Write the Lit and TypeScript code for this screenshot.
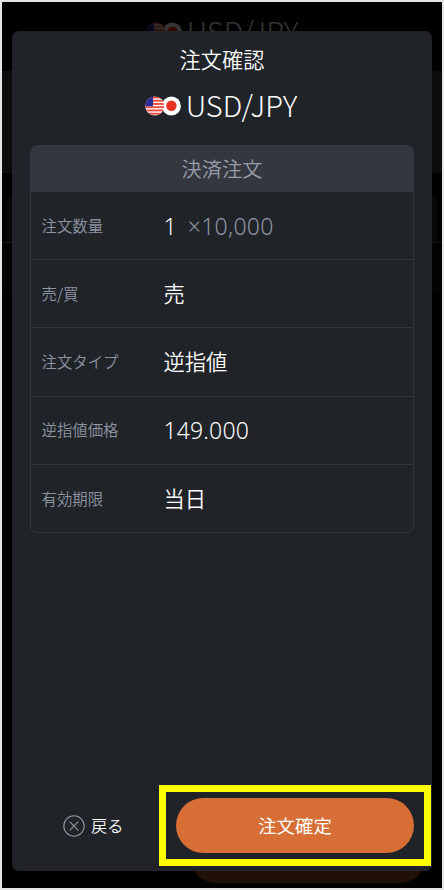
import { LitElement, html, svg, css } from "lit";
import { customElement } from "lit/decorators.js";

interface Row {
  label: string;
  value: string;
  unit?: string;
  latin?: boolean;
}

const ROWS: Row[] = [
  { label: "注文数量", value: "1", unit: "×10,000", latin: true },
  { label: "売/買", value: "売" },
  { label: "注文タイプ", value: "逆指値" },
  { label: "逆指値価格", value: "149.000", latin: true },
  { label: "有効期限", value: "当日" },
];

@customElement("currency-pair")
class CurrencyPair extends LitElement {
  static styles = css`
    :host {
      display: flex;
      justify-content: center;
      align-items: center;
      height: 40px;
      color: #fafafa;
    }
    .flags {
      width: 36px;
      height: 20px;
      margin-right: 5px;
      margin-top: 2px;
    }
    .name {
      padding-bottom: 2px;
      font: 300 29px/38px "Noto Sans CJK JP", sans-serif;
      white-space: nowrap;
    }
  `;
  render() {
    return html`
      <svg class="flags" viewBox="0 0 36 20">
        <defs><clipPath id="us"><circle cx="9.8" cy="10" r="9.5" /></clipPath></defs>
        <circle cx="26.4" cy="10" r="9.5" fill="#fff" />
        <circle cx="26.4" cy="9.8" r="5.2" fill="#ea3323" />
        <g clip-path="url(#us)">
          <rect width="20" height="20" fill="#fff" />
          ${[0, 1, 2, 3, 4, 5].map(
            (i) => svg`<rect y=${0.5 + i * 3.25} width="20" height="1.9" fill="#eb4a3d" />`
          )}
          <rect width="8" height="10.2" fill="#2a2c9c" />
        </g>
      </svg>
      <span class="name">USD/JPY</span>
    `;
  }
}

@customElement("order-table")
class OrderTable extends LitElement {
  static styles = css`
    :host {
      display: block;
      box-sizing: border-box;
      height: 388px;
      border: 1px solid #33363d;
      border-radius: 7px;
      overflow: hidden;
      font-family: "Noto Sans CJK JP", sans-serif;
      font-weight: 350;
    }
    .head {
      height: 46px;
      background: #353740;
      color: #989daa;
      font-size: 20.2px;
      line-height: 46px;
      text-align: center;
    }
    .row {
      box-sizing: border-box;
      display: flex;
      align-items: center;
      height: 68.2px;
      padding: 0 0 2px 10.5px;
      border-bottom: 1px solid #33363b;
    }
    .row:last-child {
      border-bottom: 0;
    }
    .label {
      width: 122px;
      color: #8f94a2;
      font-size: 15.4px;
      line-height: 24px;
    }
    .value {
      color: #fafafa;
      font-size: 21.3px;
      line-height: 32px;
    }
    .latin {
      padding-top: 2px;
      font-family: "Noto Sans", sans-serif;
      font-size: 23px;
      font-weight: 350;
      letter-spacing: 0.15px;
    }
    .unit {
      padding-top: 2px;
      margin-left: 11px;
      color: #8f94a2;
      font: 350 23px/32px "Noto Sans", sans-serif;
      letter-spacing: 0.25px;
    }
  `;
  render() {
    return html`
      <div class="head">決済注文</div>
      ${ROWS.map(
        (r) => html`<div class="row">
          <span class="label">${r.label}</span>
          <span class="value ${r.latin ? "latin" : ""}">${r.value}</span>
          ${r.unit ? html`<span class="unit">${r.unit}</span>` : ""}
        </div>`
      )}
    `;
  }
}

@customElement("app-root")
class AppRoot extends LitElement {
  static styles = css`
    :host {
      display: block;
      position: relative;
      box-sizing: border-box;
      width: 444px;
      height: 890px;
      border: 2px solid #e4e6e5;
      background: #000;
      overflow: hidden;
      font-family: "Noto Sans CJK JP", sans-serif;
      font-weight: 350;
    }
    .behind {
      position: absolute;
      inset: 0;
      display: flex;
      flex-direction: column;
    }
    .topbar {
      height: 69px;
      padding-top: 9px;
      box-sizing: border-box;
    }
    .topbar currency-pair {
      opacity: 0.2;
    }
    .band {
      height: 102px;
      background: #0c0c0c;
    }
    .tabs {
      box-sizing: border-box;
      height: 70px;
      padding: 23px 5px 0;
      border-bottom: 1px solid #171717;
    }
    .tab {
      height: 46px;
      border-radius: 6px 6px 0 0;
      background: #080808;
    }
    .strip {
      height: 49px;
      background: #030303;
    }
    .ghost {
      width: 238px;
      height: 55px;
      margin: auto 15px 5px auto;
      border-radius: 28px;
      background: #201006;
    }
    .modal {
      position: relative;
      box-sizing: border-box;
      display: flex;
      flex-direction: column;
      width: 420px;
      height: 840px;
      margin: 29px 0 0 10px;
      padding: 10px 1px 5px 0;
      border-radius: 7px;
      background: #202328;
    }
    .title {
      height: 36px;
      color: #fafafa;
      font-size: 21.2px;
      line-height: 35px;
      padding-left: 1px;
      text-align: center;
    }
    .modal currency-pair {
      margin: 8px 1px 0 0;
    }
    order-table {
      margin: 20px 17px 0 18px;
    }
    .actions {
      display: flex;
      justify-content: flex-end;
      align-items: center;
      margin-top: auto;
    }
    .back {
      display: flex;
      align-items: center;
      margin-right: 35.6px;
      color: #fafafa;
      font-size: 16.2px;
      line-height: 22px;
    }
    .back span {
      padding-bottom: 2px;
    }
    .back svg {
      width: 22px;
      height: 22px;
      margin-right: 6px;
    }
    .highlight {
      box-sizing: border-box;
      width: 272px;
      height: 81px;
      padding: 6px 10px;
      border: 7px solid #ffff00;
    }
    .confirm {
      display: block;
      width: 238px;
      height: 55px;
      padding: 0;
      border: 0;
      border-radius: 28px;
      background: #d76e36;
      color: #fff;
      font: 400 18.4px/55px "Noto Sans CJK JP", sans-serif;
    }
  `;
  render() {
    return html`
      <div class="behind">
        <div class="topbar"><currency-pair></currency-pair></div>
        <div class="band"></div>
        <div class="tabs"><div class="tab"></div></div>
        <div class="strip"></div>
        <div class="ghost"></div>
      </div>
      <div class="modal">
        <div class="title">注文確認</div>
        <currency-pair></currency-pair>
        <order-table></order-table>
        <div class="actions">
          <div class="back">
            <svg viewBox="0 0 22 22" fill="none" stroke="#9297a5" stroke-width="1.1">
              <circle cx="11" cy="11" r="10.2" />
              <path d="M6.7 6.7l8.6 8.6M15.3 6.7l-8.6 8.6" />
            </svg>
            <span>戻る</span>
          </div>
          <div class="highlight"><button class="confirm">注文確定</button></div>
        </div>
      </div>
    `;
  }
}
